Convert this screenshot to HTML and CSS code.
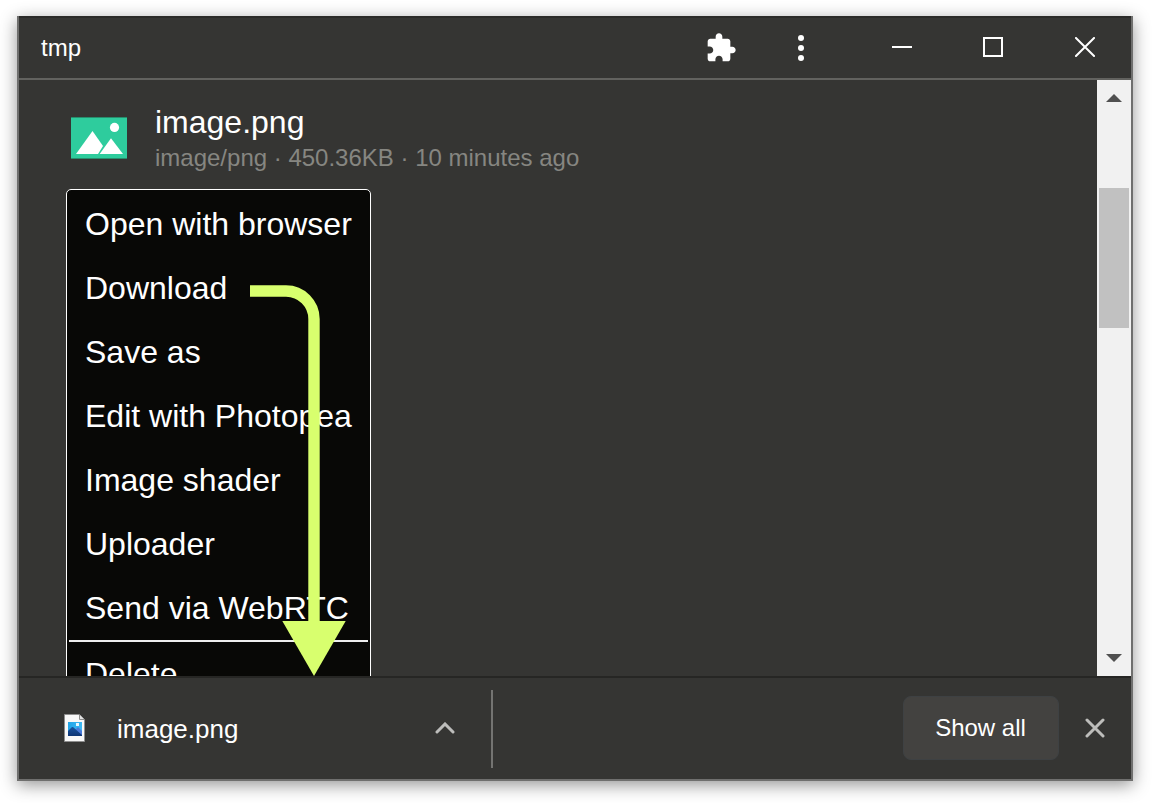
FILE: index.html
```html
<!DOCTYPE html>
<html lang="en">
<head>
<meta charset="utf-8">
<title>tmp</title>
<link rel="stylesheet" href="styles.css">
</head>
<body>
<div class="window">
  <header class="titlebar">
    <span class="title">tmp</span>
    <svg class="ext" viewBox="0 0 24 24"><path d="M20.5 11H19V7c0-1.1-.9-2-2-2h-4V3.5C13 2.12 11.88 1 10.5 1S8 2.12 8 3.5V5H4c-1.1 0-1.99.9-1.99 2v3.8H3.5c1.49 0 2.7 1.21 2.7 2.7s-1.21 2.7-2.7 2.7H2V20c0 1.1.9 2 2 2h3.8v-1.5c0-1.49 1.21-2.7 2.7-2.7 1.49 0 2.7 1.21 2.7 2.7V22H17c1.1 0 2-.9 2-2v-4h1.5c1.38 0 2.5-1.12 2.5-2.5S21.88 11 20.5 11z"/></svg>
    <svg class="dots" viewBox="0 0 6 26"><circle cx="3" cy="3" r="3"/><circle cx="3" cy="13" r="3"/><circle cx="3" cy="23" r="3"/></svg>
    <svg class="control" viewBox="0 0 20 20"><path d="M0 10H20"/></svg>
    <svg class="control" viewBox="0 0 20 20"><path d="M1 1H19V19H1Z"/></svg>
    <svg class="control" viewBox="0 0 20 20"><path d="M.3 .3L19.7 19.7M19.7 .3L.3 19.7"/></svg>
  </header>
  <main class="content">
    <div class="page">
      <div class="file">
        <svg class="thumb" viewBox="0 0 56 42"><rect class="thumb-edge" width="56" height="42"/><rect class="thumb-bg" y="1" width="56" height="40"/><circle cx="43.5" cy="10.4" r="4.6"/><path d="M5 36.9L21.5 14L32 29L27 36.9Z"/><path d="M28.7 36.9L40 21.2L52 36.9Z"/></svg>
        <div class="file-text">
          <div class="file-name">image.png</div>
          <div class="file-meta">image/png · 450.36KB · 10 minutes ago</div>
        </div>
      </div>
      <ul class="menu">
        <li>Open with browser</li>
        <li>Download</li>
        <li>Save as</li>
        <li>Edit with Photopea</li>
        <li>Image shader</li>
        <li>Uploader</li>
        <li>Send via WebRTC</li>
        <li class="split">Delete</li>
      </ul>
    </div>
    <div class="scrollbar">
      <svg class="tri" viewBox="0 0 16 8"><path d="M0 8L8 0L16 8Z"/></svg>
      <div class="thumb-bar"></div>
      <svg class="tri" viewBox="0 0 16 8"><path d="M0 0L8 8L16 0Z"/></svg>
    </div>
    <svg class="arrow" viewBox="0 0 96 391"><path class="arrow-line" d="M0 6H36A28 28 0 0 1 64 34V340"/><path class="arrow-head" d="M32.3 336H95.7L64 391Z"/></svg>
  </main>
  <footer class="shelf">
    <svg class="doc" viewBox="0 0 21 28">
      <defs><linearGradient id="sky"><stop offset="0" stop-color="#21a5e8"/><stop offset="1" stop-color="#3db8f3"/></linearGradient><linearGradient id="hill" x2="0" y2="1"><stop offset="0" stop-color="#19539e"/><stop offset="1" stop-color="#0e3574"/></linearGradient></defs>
      <path d="M.5 .5H15L20.5 6V27.5H.5Z" fill="#f8f8f8" stroke="#8e8e8e"/>
      <path d="M15.5 .5V5.5H20.5" fill="#e4e4e4" stroke="#8e8e8e"/>
      <path d="M4 8H18V22H4Z" fill="url(#sky)"/>
      <path d="M10 17L14 13L18 17V22H10Z" fill="#4a79d8"/>
      <path d="M4 17L8 13H9L18 21V22H4Z" fill="url(#hill)"/>
      <path d="M12 9H15V12H12Z" fill="#e9f7fd"/>
    </svg>
    <span class="download-name">image.png</span>
    <svg class="chevron" viewBox="0 0 20 12"><path d="M2 10L10 2L18 10"/></svg>
    <div class="divider"></div>
    <button class="show-all">Show all</button>
    <svg class="dismiss" viewBox="0 0 20 20"><path d="M2 2L18 18M18 2L2 18"/></svg>
  </footer>
</div>
</body>
</html>
```
FILE: styles.css
```css
* { box-sizing: border-box; }
body {
  margin: 0;
  padding: 16px 21px 22px 17px;
  height: 803px;
  overflow: hidden;
  background: #fff;
  color: #fff;
  font-family: "Liberation Sans", Arial, sans-serif;
}
svg { display: block; flex: none; }
.window {
  display: flex;
  flex-direction: column;
  width: 1116px;
  height: 765px;
  border: solid #6f6f6e;
  border-width: 0 2px 2px;
  background: #353533;
  box-shadow: 0 4px 16px rgba(0, 0, 0, .42);
}
.titlebar {
  display: flex;
  align-items: center;
  height: 64px;
  padding: 0 36px 2px 22px;
  border-top: 2px solid #2b2b29;
  border-bottom: 2px solid #62625f;
  flex: none;
}
.title { flex: 1; font-size: 24px; line-height: 28px; margin-top: 2px; }
.ext { width: 32px; height: 32px; fill: #fff; margin: 2px 61px 0 0; }
.dots { width: 6px; height: 26px; fill: #fff; margin: 2px 88px 0 0; }
.control { width: 20px; height: 20px; fill: none; stroke: #fff; stroke-width: 2; margin-right: 71px; }
.control:nth-of-type(4) { margin-right: 72px; }
.control:last-child { margin-right: 0; }
.content { position: relative; display: flex; height: 596px; overflow: hidden; flex: none; }
.page { flex: 1; padding: 22px 0 0 47px; }
.file { display: flex; height: 87px; padding-left: 5px; }
.thumb { width: 56px; height: 42px; margin: 15px 28px 0 0; fill: #fff; }
.thumb-edge { fill: #278e6d; }
.thumb-bg { fill: #2ecc9d; }
.file-name { font-size: 32px; line-height: 40px; }
.file-meta { font-size: 24px; line-height: 32px; color: #868681; }
.menu {
  width: 305px;
  height: 560px;
  margin: 0;
  padding: 2px;
  list-style: none;
  background: #080806;
  border: 1px solid #fff;
  border-radius: 5px;
}
.menu li { height: 64px; padding-left: 16px; font-size: 32px; line-height: 64px; white-space: nowrap; }
.menu .split { height: 66px; border-top: 2px solid #eee; }
.scrollbar {
  display: flex;
  flex-direction: column;
  align-items: center;
  width: 34px;
  padding: 14px 0;
  background: #f1f1f1;
}
.tri { width: 16px; height: 8px; fill: #505050; }
.thumb-bar { width: 30px; height: 140px; margin: 86px 0 auto; background: #c1c1c1; }
.arrow { position: absolute; left: 231px; top: 205px; width: 96px; height: 391px; }
.arrow-line { fill: none; stroke: #d8ff6e; stroke-width: 11.4; }
.arrow-head { fill: #d8ff6e; }
.shelf { display: flex; align-items: center; flex: 1; padding: 0 26px 1px 45px; border-top: 2px solid #262624; }
.doc { width: 21px; height: 28px; }
.download-name { width: 318px; margin-left: 32px; font-size: 26px; line-height: 30px; margin-top: 2px; }
.chevron { width: 20px; height: 12px; fill: none; stroke: #bdbdbb; stroke-width: 3; stroke-linecap: round; }
.divider { width: 2px; height: 78px; margin: 1px 0 0 36px; background: #747472; }
.show-all {
  width: 156px;
  height: 64px;
  margin: 0 26px 0 auto;
  padding: 0 1px 0 0;
  border: 1px solid #3e4143;
  border-radius: 8px;
  background: #434240;
  color: #fff;
  font: 24px/28px "Liberation Sans", Arial, sans-serif;
}
.dismiss { width: 20px; height: 20px; fill: none; stroke: #bdbdbb; stroke-width: 3; stroke-linecap: round; }
```
